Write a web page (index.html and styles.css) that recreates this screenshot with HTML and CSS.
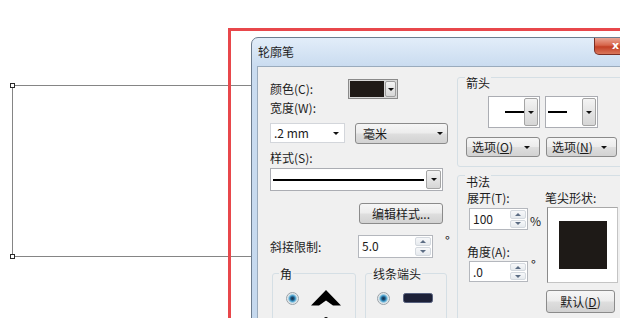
FILE: index.html
```html
<!DOCTYPE html>
<html lang="zh-CN">
<head>
  <meta charset="UTF-8" />
  <title>轮廓笔</title>
  <link rel="stylesheet" href="styles.css">
</head>
<body>

  <!-- drawing on the canvas -->
  <div class="shape"></div>
  <span class="node node-top"></span>
  <span class="node node-bottom"></span>

  <div class="window">
    <div class="titlebar">
      <span class="title">轮廓笔</span>
      <div class="close">x</div>
    </div>

    <div class="client">
      <div class="col-left">
        <div class="row-color">
          <label class="lbl-fixed">颜色(C):</label>
          <div class="color-btn">
            <span class="swatch"></span>
            <span class="drop"><i class="arrow"></i></span>
          </div>
        </div>

        <label class="lbl lbl-width">宽度(W):</label>
        <div class="row-width">
          <div class="combo combo-width"><span>.2 mm</span><i class="arrow"></i></div>
          <div class="btn btn-unit"><span>毫米</span><i class="arrow"></i></div>
        </div>

        <label class="lbl lbl-style">样式(S):</label>
        <div class="combo-style">
          <span class="line"></span>
          <span class="drop"><i class="arrow"></i></span>
        </div>

        <div class="btn btn-edit">编辑样式...</div>

        <div class="row-miter">
          <label class="lbl-miter">斜接限制:</label>
          <div class="spin spin-miter">
            <span>5.0</span>
            <div class="spin-btns"><b class="up"></b><b class="down"></b></div>
          </div>
          <span class="deg">°</span>
        </div>

        <div class="row-groups">
          <div class="group group-corner">
            <span class="group-title">角</span>
            <div class="opt">
              <span class="radio checked"></span>
              <svg width="30" height="16" viewBox="0 0 30 16"><path d="M0 15.5 L15 0 L30 15.5 L22 15.5 L15 10.5 L8 15.5 Z" fill="#000"/></svg>
            </div>
            <div class="opt">
              <span class="radio"></span>
              <svg width="30" height="16" viewBox="0 0 30 16"><path d="M0 15.5 L13 2 Q15 0 17 2 L30 15.5 L22 15.5 L15 10.5 L8 15.5 Z" fill="#000"/></svg>
            </div>
          </div>
          <div class="group group-cap">
            <span class="group-title">线条端头</span>
            <div class="opt">
              <span class="radio checked"></span>
              <svg width="30" height="16" viewBox="0 0 30 16"><rect x="0.5" y="3.5" width="29" height="9" rx="2" fill="#1d2138" stroke="#56607e"/></svg>
            </div>
            <div class="opt">
              <span class="radio"></span>
              <svg width="30" height="16" viewBox="0 0 30 16"><rect x="4.5" y="3.5" width="21" height="9" rx="4.5" fill="#1d2138"/></svg>
            </div>
          </div>
        </div>
      </div>

      <div class="col-right">
        <div class="group group-arrows">
          <span class="group-title">箭头</span>
          <div class="arrows-row">
            <div class="arrow-combo combo-start">
              <span class="preview"><span class="stroke"></span></span>
              <span class="drop"><i class="arrow"></i></span>
            </div>
            <div class="arrow-combo combo-end">
              <span class="preview"><span class="stroke"></span></span>
              <span class="drop"><i class="arrow"></i></span>
            </div>
          </div>
          <div class="opts-row">
            <div class="btn btn-opt btn-opt-start"><span>选项(<u>O</u>)</span><i class="arrow"></i></div>
            <div class="btn btn-opt btn-opt-end"><span>选项(<u>N</u>)</span><i class="arrow"></i></div>
          </div>
        </div>

        <div class="group group-callig">
          <span class="group-title">书法</span>
          <div class="callig-body">
            <div class="callig-left">
              <label class="lbl lbl-first">展开(T):</label>
              <div class="spin-row">
                <div class="spin spin-small spin-stretch">
                  <span>100</span>
                  <div class="spin-btns"><b class="up"></b><b class="down"></b></div>
                </div>
                <span class="pct">%</span>
              </div>
              <label class="lbl lbl-angle">角度(A):</label>
              <div class="spin-row spin-row-angle">
                <div class="spin spin-small spin-angle">
                  <span>.0</span>
                  <div class="spin-btns"><b class="up"></b><b class="down"></b></div>
                </div>
                <span class="deg deg-small">°</span>
              </div>
            </div>
            <div class="callig-right">
              <label class="lbl lbl-first">笔尖形状:</label>
              <div class="nib"><span class="nib-shape"></span></div>
              <div class="btn btn-default">默认(<u>D</u>)</div>
            </div>
          </div>
        </div>
      </div>
    </div>
  </div>

  <div class="highlight"></div>

</body>
</html>
```

FILE: styles.css
```css
* {
  margin: 0;
  padding: 0;
  box-sizing: border-box;
}

html, body {
  overflow: hidden;
}

body {
  width: 620px;
  height: 318px;
  position: relative;
  background: #fff;
  font-family: "Noto Sans CJK SC", "Noto Sans", sans-serif;
  font-size: 12px;
  color: #1c1c1c;
}

u {
  text-decoration: underline;
  text-underline-offset: 1px;
}

/* canvas drawing */
.shape {
  position: absolute;
  left: 12px;
  top: 85px;
  width: 300px;
  height: 172px;
  border: 1px solid #858585;
  border-right: none;
}

.node {
  position: absolute;
  left: 10px;
  width: 5px;
  height: 5px;
  border: 1px solid #2a2a2a;
  background: #fff;
}

.node-top { top: 83px; }
.node-bottom { top: 254px; }

.highlight {
  position: absolute;
  left: 228px;
  top: 28px;
  width: 440px;
  height: 340px;
  border: 3px solid #e8474b;
}

/* dialog window */
.window {
  position: absolute;
  left: 251px;
  top: 37px;
  width: 392px;
  height: 400px;
  border: 1px solid #6c7c8e;
  border-radius: 7px 7px 0 0;
  background: linear-gradient(#e2edf9, #cadcf0 28px, #c3d7ed);
  display: flex;
  flex-direction: column;
}

.titlebar {
  height: 28px;
  flex-shrink: 0;
  display: flex;
  align-items: center;
  padding-left: 6px;
}

.title {
  line-height: 14px;
  color: #1e1e1e;
}

.close {
  margin-left: auto;
  margin-right: 5px;
  align-self: flex-start;
  width: 43px;
  height: 17px;
  border: 1px solid #7a2e24;
  border-top: none;
  border-radius: 0 0 5px 5px;
  background: linear-gradient(#eaa493, #d7654b 45%, #c33f25 55%, #d9775c);
  color: #fff;
  font: bold 11px "DejaVu Sans", sans-serif;
  text-align: center;
  line-height: 15px;
}

.client {
  flex: 1;
  margin: 0 5px;
  background: #f0f0f0;
  border: 1px solid #9aabbd;
  border-bottom: none;
  display: flex;
  align-items: flex-start;
  padding: 10px 0 0 12px;
}

/* shared controls */
.lbl {
  display: block;
  line-height: 16px;
}

.arrow {
  display: inline-block;
  width: 0;
  height: 0;
  border-left: 3px solid transparent;
  border-right: 3px solid transparent;
  border-top: 3px solid #111;
}

.btn {
  border: 1px solid #8b8b8b;
  border-radius: 3px;
  background: linear-gradient(#f6f6f6, #ececec 48%, #dedede 52%, #d2d2d2);
  line-height: 14px;
  display: flex;
  align-items: center;
}

.drop {
  width: 14px;
  display: flex;
  align-items: center;
  justify-content: center;
  border: 1px solid #a4a4a4;
  border-radius: 2px;
  background: linear-gradient(#f4f4f4, #e4e4e4 50%, #d6d6d6);
}

.combo {
  background: #fff;
  border: 1px solid #d3d6db;
  display: flex;
  align-items: center;
  line-height: 14px;
}

.spin {
  background: #fff;
  border: 1px solid #b4b7bd;
  display: flex;
  line-height: 14px;
}

.spin span {
  flex: 1;
  padding: 3px 0 0 3px;
}

.spin-btns {
  width: 18px;
  display: flex;
  flex-direction: column;
  padding: 1px;
  gap: 1px;
}

.spin-btns b {
  flex: 1;
  display: flex;
  align-items: center;
  justify-content: center;
  border: 1px solid #d4d9df;
  border-radius: 2px;
  background: linear-gradient(#f7f8fa, #e6eaee);
}

.spin-btns b::after {
  content: "";
  border-left: 3px solid transparent;
  border-right: 3px solid transparent;
}

.spin-btns .up::after { border-bottom: 3px solid #5c6d84; }
.spin-btns .down::after { border-top: 3px solid #5c6d84; }

.deg {
  align-self: flex-start;
  line-height: 12px;
  font-size: 13px;
}

.group {
  border: 1px solid #d5dfe5;
  border-radius: 3px;
}

.group-title {
  display: block;
  width: fit-content;
  line-height: 14px;
  padding: 0 1px;
  background: #f0f0f0;
}

.radio {
  width: 13px;
  height: 13px;
  border-radius: 50%;
  border: 1px solid #9aa2a8;
  background: radial-gradient(circle, #dfe4e8 0, #f6f7f8 6px);
}

.radio.checked {
  background: radial-gradient(circle, #17324c 0, #1e4d73 1.5px, #3f97c7 2.8px, #8cc6e0 3.8px, #d8e1e6 4.6px, #f3f5f6 6px);
}

.opt {
  display: flex;
  align-items: center;
  height: 16px;
  margin-top: 9px;
}

.opt + .opt {
  margin-top: 10px;
}

/* left column */
.col-left {
  width: 178px;
  margin-top: 2px;
  display: flex;
  flex-direction: column;
  align-items: flex-start;
}

.col-left > * {
  flex-shrink: 0;
}

.row-color {
  display: flex;
  align-items: center;
  height: 20px;
}

.lbl-fixed {
  width: 78px;
  line-height: 16px;
}

.color-btn {
  width: 50px;
  height: 20px;
  border: 1px solid #8a8a8a;
  background: #d8d8d8;
  display: flex;
  padding: 1px;
  gap: 1px;
}

.swatch {
  width: 34px;
  background: #1f1a17;
}

.color-btn .drop {
  flex: 1;
  border-color: #9c9c9c;
}

.lbl-width {
  margin-top: 1px;
}

.row-width {
  display: flex;
  align-items: flex-start;
  margin-top: 7px;
}

.combo-width {
  width: 75px;
  height: 20px;
  padding: 0 5px 0 3px;
}

.combo-width span {
  flex: 1;
}

.btn-unit {
  width: 93px;
  height: 21px;
  margin-left: 10px;
  padding: 0 4px 0 7px;
}

.btn-unit span {
  flex: 1;
}

.lbl-style {
  margin-top: 6px;
}

.combo-style {
  width: 173px;
  height: 23px;
  margin-top: 2px;
  background: #fff;
  border: 1px solid #abadb3;
  display: flex;
  padding: 1px;
}

.combo-style .line {
  flex: 1;
  height: 2px;
  align-self: center;
  background: #000;
  margin: 0 2px 0 1px;
}

.combo-style .drop {
  width: 15px;
}

.btn-edit {
  width: 84px;
  height: 21px;
  margin-top: 12px;
  margin-left: 89px;
  justify-content: center;
}

.row-miter {
  display: flex;
  align-items: center;
  height: 23px;
  margin-top: 11px;
}

.lbl-miter {
  width: 88px;
  line-height: 16px;
}

.spin-miter {
  width: 75px;
  height: 23px;
}

.row-miter .deg {
  margin: 0 0 0 12px;
}

.row-groups {
  display: flex;
  margin-top: 15px;
}

.row-groups .group {
  height: 70px;
}

.row-groups .group-title {
  margin: -7px 0 0 6px;
}

.group-corner {
  width: 84px;
  margin-left: 2px;
}

.group-corner .opt {
  padding-left: 13px;
  gap: 12px;
}

.group-cap {
  width: 82px;
  margin-left: 9px;
}

.group-cap .opt {
  padding-left: 11px;
  gap: 13px;
}

/* right column */
.col-right {
  width: 171px;
  margin-left: 9px;
}

.group-arrows {
  padding-bottom: 9px;
}

.group-arrows .group-title {
  margin: -2px 0 0 7px;
}

.arrows-row {
  display: flex;
  gap: 5px;
  margin: 6px 0 0 30px;
}

.arrow-combo {
  height: 32px;
  background: #fff;
  border: 1px solid #abadb3;
  display: flex;
  padding: 1px;
}

.combo-start { width: 52px; }
.combo-end { width: 53px; }

.arrow-combo .preview {
  flex: 1;
  display: flex;
  align-items: center;
}

.combo-start .preview { justify-content: flex-end; }

.combo-end .preview { padding-left: 1px; }

.arrow-combo .stroke {
  width: 19px;
  height: 2px;
  background: #000;
}

.arrow-combo .drop {
  width: 14px;
}

.opts-row {
  display: flex;
  gap: 6px;
  margin: 9px 0 0 8px;
}

.btn-opt {
  height: 20px;
  padding: 0 9px 0 5px;
  justify-content: space-between;
}

.btn-opt-start { width: 74px; }
.btn-opt-end { width: 71px; }

.group-callig {
  margin-top: 8px;
  height: 160px;
}

.group-callig .group-title {
  margin: -1px 0 0 7px;
}

.callig-body {
  display: grid;
  grid-template-columns: 78px 1fr;
  padding-left: 9px;
}

.lbl-first {
  margin-top: 1px;
}

.spin-row {
  display: flex;
  align-items: center;
  margin-top: 2px;
}

.spin-small {
  width: 59px;
  margin-left: 2px;
}

.spin-stretch { height: 22px; }
.spin-angle { height: 21px; }

.pct {
  margin-left: 2px;
  line-height: 14px;
  padding-top: 3px;
}

.lbl-angle {
  margin-top: 14px;
}

.spin-row-angle {
  margin-top: 1px;
}

.deg-small {
  margin-left: 3px;
  margin-top: -2px;
}

.nib {
  width: 71px;
  height: 76px;
  margin: 1px 0 0 2px;
  background: #fff;
  border: 1px solid #c4c4c4;
  border-left-color: #8a8a8a;
  border-top-color: #a8a8a8;
  display: flex;
  align-items: center;
  justify-content: center;
}

.nib-shape {
  width: 48px;
  height: 48px;
  background: #1e1a17;
}

.btn-default {
  width: 69px;
  height: 23px;
  margin: 7px 0 0 1px;
  justify-content: center;
}
```
